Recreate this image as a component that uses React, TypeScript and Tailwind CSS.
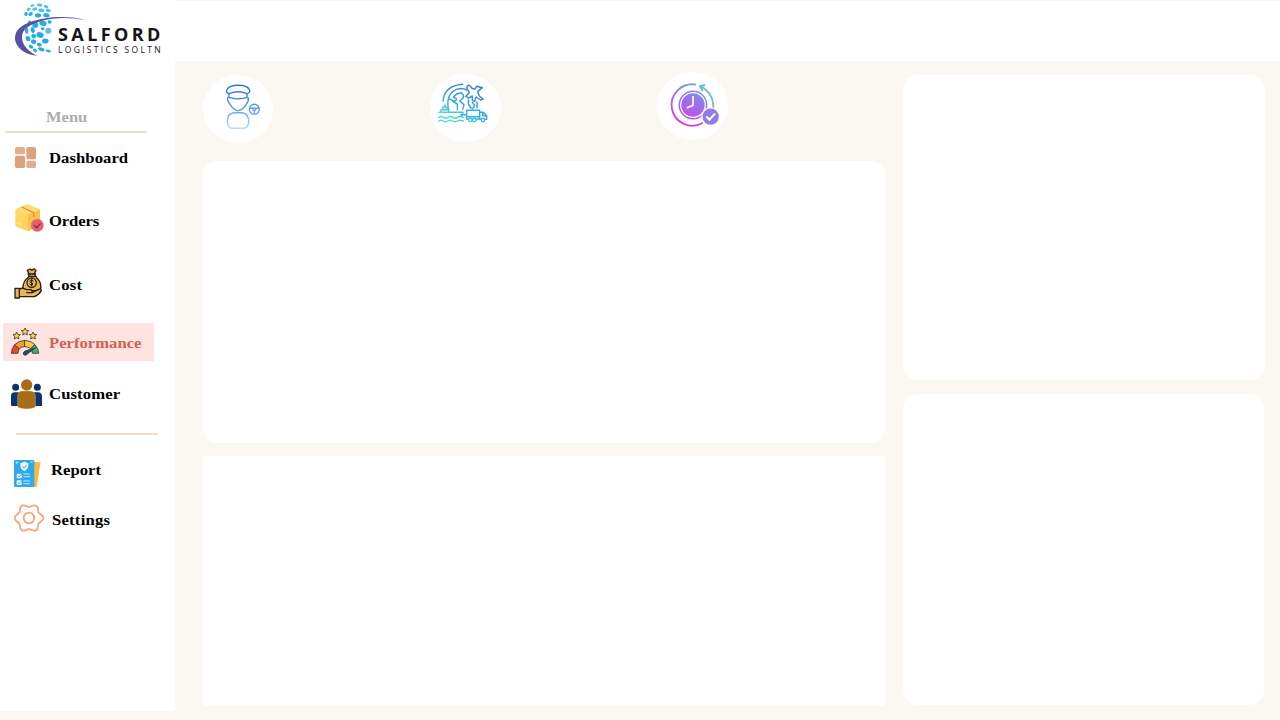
import type { ReactNode } from "react";

const DOTS: [number, number, number, number, number][] = [
  [97, 17, 6, 3.5, -20], [119, 15, 8.5, 4.5, 5], [138, 20, 7.5, 4.5, 20],
  [86, 28, 6, 4.5, -35], [104, 27, 8, 5, -15], [124, 31, 9.5, 5.5, 10], [145, 32, 8, 5, 15],
  [78, 42, 5.5, 5.5, -40], [92, 42, 7, 5.5, -30], [114, 46, 9.5, 6.5, -5], [139, 46, 9.5, 6.5, 10],
  [88, 70, 5, 9, 10], [106, 75, 9, 8.5, 20], [129, 70, 11, 8, 20], [149, 66, 6, 5, 10],
  [80, 92, 5, 9, 0], [98, 90, 6, 9, -10], [120, 105, 11, 8.5, 10], [101, 108, 7, 7, 10],
  [145, 92, 9, 9, 0], [128, 86, 5.5, 4.5, 10], [84, 116, 7, 8, -30], [101, 125, 8, 7, 20],
  [136, 123, 10, 7.5, 10], [118, 134, 7.5, 5.5, 15], [93, 140, 7.5, 5, 30], [124, 148, 10, 5, 20],
  [145, 153, 8, 4, 10], [105, 151, 7, 4.5, 30],
];

function Logo() {
  return (
    <div className="flex h-[62px] shrink-0 items-start">
      <svg className="-mr-[32px] h-[62px] w-[90px] shrink-0" viewBox="0 0 270 186">
        {DOTS.map(([x, y, rx, ry, a], i) => (
          <ellipse key={i} cx={x} cy={y} rx={rx} ry={ry} transform={`rotate(${a} ${x} ${y})`} fill={i < 7 ? "#4cc5e6" : i === 19 ? "#65b8e8" : "#24ade3"} />
        ))}
        <path d="M256 61C210 45 135 49 86 68C54 80 41 99 46 123C53 151 83 164 113 168C87 155 66 138 66 110C66 86 90 73 126 62C165 52 211 51 256 61Z" fill="#5950a5" />
      </svg>
      <div className="pt-[23px] font-['Open_Sans'] whitespace-nowrap text-[#151515]">
        <div className="text-[18px] leading-[23px] font-bold tracking-[3.4px]">SALFORD</div>
        <div className="text-[8.5px] leading-[7px] font-medium tracking-[2.3px]">LOGISTICS SOLTN</div>
      </div>
    </div>
  );
}

const DashboardIcon = (
  <g fill="#dfa17c">
    <rect x="45" y="141" width="30" height="22" rx="5" fill="#e4ae8f" />
    <rect x="79" y="141" width="29" height="37" rx="5" />
    <rect x="45" y="167" width="30" height="37" rx="5" />
    <rect x="79" y="182" width="29" height="22" rx="5" fill="#e4ae8f" />
  </g>
);

const OrdersIcon = (
  <g>
    <path d="M46 43L82 27L120 43L84 58Z" fill="#ffdc72" />
    <path d="M46 43L84 58V109L50 95Q46 93 46 89Z" fill="#ffd463" />
    <path d="M84 58L120 43V91L84 109Z" fill="#fcc341" />
    <path d="M65 36L101 53V66" fill="none" stroke="#df8c45" strokeWidth="4" />
    <path d="M52 84L64 89" stroke="#ffe9a0" strokeWidth="4" />
    <circle cx="112" cy="91" r="19" fill="#e6606c" />
    <path d="M103 91L110 98L122 85" fill="none" stroke="#70344d" strokeWidth="4" />
  </g>
);

const CostIcon = (
  <g stroke="#24201b" strokeWidth="4" strokeLinejoin="round" strokeLinecap="round" fill="#eeb54f">
    <path d="M87 236L82 226L90 222L96 226L102 221L108 227L103 236L111 250Q125 263 122 281Q119 287 106 287H76Q66 282 70 268Q74 254 86 245Z" />
    <path d="M84 237H107M86 244H106" />
    <circle cx="95" cy="263" r="14" />
    <path d="M100 258Q91 252 90 259Q90 263 96 264Q101 267 97 270Q92 272 89 267M95 253V273" fill="none" strokeWidth="3" />
    <path d="M58 283Q67 276 79 284H93Q101 289 94 293H80H96L116 283Q124 281 124 287Q117 300 103 305H58Z" />
    <path d="M45 280H58V309H45Z" />
  </g>
);

const STAR = "M0 -11L3.5 -4L11 -3L5.5 2L7 10L0 6L-7 10L-5.5 2L-11 -3L-3.5 -4Z";

const PerformanceIcon = (
  <g stroke="#3d372c" strokeWidth="2.5" strokeLinejoin="round">
    <g fill="#ffd04b">
      <path d={STAR} transform="translate(50 62)" />
      <path d={STAR} transform="translate(75 50)" />
      <path d={STAR} transform="translate(99 62)" />
    </g>
    <path d="M34 115Q34 101 44 89L58 101Q54 107 54 115Z" fill="#e84736" />
    <path d="M44 89Q56 77 74 76V95Q64 95 58 101Z" fill="#f39b3c" />
    <path d="M74 76Q94 77 105 89L92 101Q85 95 74 95Z" fill="#fbc744" />
    <path d="M105 89Q116 101 116 115H97Q97 107 92 101Z" fill="#34b56b" />
    <path d="M107 98L75 108Q67 112 71 119Q78 124 83 116Z" fill="#2e4a5b" stroke="#263f50" />
  </g>
);

const CustomerIcon = (
  <g>
    <g fill="#0b326b">
      <circle cx="47" cy="217" r="10.5" />
      <circle cx="112" cy="217" r="10.5" />
      <path d="M33 272V242Q34 232 45 232H60V273H36Q33 273 33 270Z" />
      <path d="M99 232H114Q125 233 126 243V273H99Z" />
    </g>
    <path d="M53 277V243Q54 228 66 228H92Q105 229 106 243V277Q95 282 80 282Q64 282 53 277Z" fill="#a66d15" stroke="#f1eee7" strokeWidth="1" />
    <circle cx="80" cy="210" r="17" fill="#a66d15" />
  </g>
);

const ReportIcon = (
  <g>
    <path d="M94 110L122 112L110 185H94Z" fill="#fbb943" />
    <rect x="42" y="105" width="61" height="81" rx="4" fill="#2fa9ec" />
    <path d="M61 115L73 110L85 115Q87 131 73 139Q59 131 61 115Z" fill="#f1fbff" />
    <path d="M67 124L72 129L80 119" fill="none" stroke="#2fa9ec" strokeWidth="3" />
    <g fill="#e8f8ff">
      <rect x="50" y="146" width="15" height="14" rx="3" />
      <rect x="50" y="166" width="15" height="14" rx="3" />
    </g>
    <path d="M53 152L57 156L65 147M53 172L57 176L65 167" fill="none" stroke="#37a6df" strokeWidth="2.5" />
    <path d="M70 147H90M70 155H90M70 168H90M70 176H90M49 111H56M49 111V118M91 111H98" fill="none" stroke="#b9e7ff" strokeWidth="3" />
  </g>
);

// Six-lobed outline with lobes at 0, 60, 120... degrees
const GEAR_POINTS = Array.from({ length: 120 }, (_, i) => {
  const t = (i * Math.PI) / 60;
  const r = 38 + 4.5 * Math.cos(6 * t);
  return `${(87 + r * Math.cos(t)).toFixed(1)},${(279 + r * Math.sin(t)).toFixed(1)}`;
}).join(" ");

const SettingsIcon = (
  <g fill="none" stroke="#f5a57e" strokeWidth="5.5" strokeLinejoin="round">
    <polygon points={GEAR_POINTS} />
    <circle cx="87" cy="279" r="16" />
  </g>
);

type ItemProps = { label: string; viewBox: string; icon: ReactNode; className: string };

function Item({ label, viewBox, icon, className }: ItemProps) {
  return (
    <a className={`ml-[3px] flex h-[38px] w-[151px] shrink-0 items-center text-[15px] leading-5 font-bold whitespace-nowrap ${className}`}>
      <svg className="h-[38px] w-[46px] shrink-0" viewBox={viewBox}>{icon}</svg>
      <span className="origin-left scale-x-[1.11]">{label}</span>
    </a>
  );
}

function Sidebar() {
  return (
    <aside className="flex h-[711px] w-[175px] shrink-0 flex-col bg-white font-['Liberation_Serif',serif] text-black">
      <Logo />
      <div className="mt-[45px] ml-[46px] h-5 w-[60px] shrink-0 origin-left scale-x-[1.1] text-[15px] leading-5 font-semibold text-[#adadad]">Menu</div>
      <div className="mt-[4px] ml-[5px] h-[2px] w-[142px] shrink-0 bg-[#f3dccb]" />
      <nav className="flex flex-col">
        <Item label="Dashboard" viewBox="9 117 138 114" icon={DashboardIcon} className="mt-[6px] tracking-[0.05px]" />
        <Item label="Orders" viewBox="9 21 138 114" icon={OrdersIcon} className="mt-[25px] tracking-[-0.1px]" />
        <Item label="Cost" viewBox="9 213 138 114" icon={CostIcon} className="mt-[26px] tracking-[0.2px]" />
        <Item label="Performance" viewBox="9 24 138 114" icon={PerformanceIcon} className="mt-[19px] bg-[#fee3e0] text-[#d2604f] [&>span]:pt-[2px]" />
        <Item label="Customer" viewBox="9 180 138 114" icon={CustomerIcon} className="mt-[14px] tracking-[0.1px]" />
      </nav>
      <div className="mt-[20px] ml-[16px] h-[2px] w-[142px] shrink-0 bg-[#f3dccb]" />
      <nav className="flex flex-col">
        <Item label="Report" viewBox="9 78 138 114" icon={ReportIcon} className="mt-[16px] gap-[2px]" />
        <Item label="Settings" viewBox="9 228 138 114" icon={SettingsIcon} className="mt-[12px] gap-[3px] tracking-[0.2px]" />
      </nav>
    </aside>
  );
}

function DriverBadge() {
  return (
    <svg className="mt-[3px] h-[68px] w-[70px] rounded-[50%] bg-white" viewBox="24 27 210 204" preserveAspectRatio="none">
      <defs>
        <linearGradient id="driver" gradientUnits="userSpaceOnUse" x1="0" y1="57" x2="0" y2="190">
          <stop stopColor="#2878d8" /><stop offset=".5" stopColor="#589ce9" /><stop offset="1" stopColor="#b9dcfb" />
        </linearGradient>
      </defs>
      <g fill="none" stroke="url(#driver)" strokeWidth="4.3" strokeLinejoin="round">
        <path d="M102 83Q92 80 95 72Q103 58 129 58Q157 58 164 72Q166 80 156 83Q130 71 102 83Z" />
        <path d="M102 83V94Q129 103 156 94V83" />
        <path d="M102 94Q96 94 98 102Q101 110 106 116Q116 133 129 134Q144 132 153 116Q162 106 160 96L156 94" />
        <path d="M97 164Q99 141 117 140H141Q159 141 161 164Q161 186 146 187H112Q97 186 97 164Z" />
        <circle cx="178" cy="130" r="15" />
        <circle cx="178" cy="130" r="4" />
        <path d="M164 127H174M182 127H192M178 134V144" />
      </g>
    </svg>
  );
}

function ShippingBadge() {
  return (
    <svg className="mt-[2px] h-[68px] w-[71px] rounded-[50%] bg-white" viewBox="30 24 213 204" preserveAspectRatio="none">
      <defs>
        <linearGradient id="shipping" gradientUnits="userSpaceOnUse" x1="150" y1="55" x2="100" y2="168">
          <stop stopColor="#347ddd" /><stop offset=".5" stopColor="#38a5dc" /><stop offset="1" stopColor="#5bded7" />
        </linearGradient>
      </defs>
      <g fill="none" stroke="url(#shipping)" strokeWidth="4.4" strokeLinejoin="round" strokeLinecap="round">
        <path d="M69 106Q72 60 128 55" />
        <path d="M86 132Q77 91 101 75Q119 62 141 72M88 99L99 104Q111 107 109 98L100 93L110 84L124 80M124 81Q134 88 129 96L119 105L132 116L128 130M112 132V114L98 106" />
        <path d="M143 59Q149 55 155 66L164 70L170 61L187 65L173 77L178 90L189 99L182 102L168 93L164 106L157 103V90L146 96L137 91L148 80L140 66Z" />
        <path d="M145 102Q143 114 152 125L158 128L164 119L157 109M171 108V125" />
        <path d="M57 139H129L124 151M63 138V131H86V138M69 130V123H81V130M75 122V117" />
        <path d="M56 154Q63 149 70 154T84 154T98 154T112 154T130 154M56 165Q63 160 70 165T84 165T98 165T112 165T130 165" />
        <path d="M123 146H138M140 133H179V159H140ZM180 139H190L200 149V160H180M188 140V149H199M140 152H178" stroke="#38aede" />
        <circle cx="151" cy="162" r="5" fill="white" />
        <circle cx="163" cy="162" r="5" fill="white" />
        <circle cx="189" cy="162" r="5" fill="white" />
      </g>
    </svg>
  );
}

function OnTimeBadge() {
  return (
    <svg className="h-[68px] w-[71px] rounded-[50%] bg-white" viewBox="21 18 213 204" preserveAspectRatio="none">
      <defs>
        <linearGradient id="ontime" gradientUnits="userSpaceOnUse" x1="155" y1="55" x2="98" y2="177">
          <stop stopColor="#6fa7e7" /><stop offset=".45" stopColor="#9b70eb" /><stop offset="1" stopColor="#d83be2" />
        </linearGradient>
      </defs>
      <g fill="none" stroke="url(#ontime)" strokeWidth="5.5">
        <path d="M138 56A62 62 0 1 0 159 170" />
        <path d="M151 61Q190 79 190 125" stroke="#75b7e5" />
        <path d="M165 57L150 61L158 75" stroke="#65b5e5" />
        <circle cx="129" cy="117" r="41" strokeWidth="4.5" />
      </g>
      <circle cx="129" cy="117" r="35" fill="url(#ontime)" />
      <path d="M129 90V118L110 126" fill="none" stroke="white" strokeWidth="5" />
      <circle cx="182" cy="152" r="28" fill="white" />
      <circle cx="182" cy="152" r="24.5" fill="#937be5" />
      <path d="M169 151L178 161L195 143" fill="none" stroke="white" strokeWidth="6" />
    </svg>
  );
}

export default function App() {
  return (
    <div className="flex h-[720px] w-[1280px] overflow-hidden bg-[#fbf8f3]">
      <Sidebar />
      <div className="flex flex-1 flex-col">
        <header className="h-[61px] shrink-0 border-t border-[#f8f8f7] bg-white" />
        <main className="flex flex-1 gap-[18px] pl-[28px]">
          <div className="flex w-[682px] flex-col pt-[11px]">
            <div className="flex h-[89px] items-start">
              <div className="w-[227px]"><DriverBadge /></div>
              <div className="w-[227px]"><ShippingBadge /></div>
              <OnTimeBadge />
            </div>
            <section className="h-[282px] rounded-[14px] bg-white" />
            <section className="mt-[13px] h-[250px] bg-white" />
          </div>
          <div className="flex w-[362px] flex-col gap-[14px] pt-[14px]">
            <section className="h-[305px] rounded-[15px] bg-white" />
            <section className="h-[311px] w-[361px] rounded-[15px] bg-white" />
          </div>
        </main>
      </div>
    </div>
  );
}
